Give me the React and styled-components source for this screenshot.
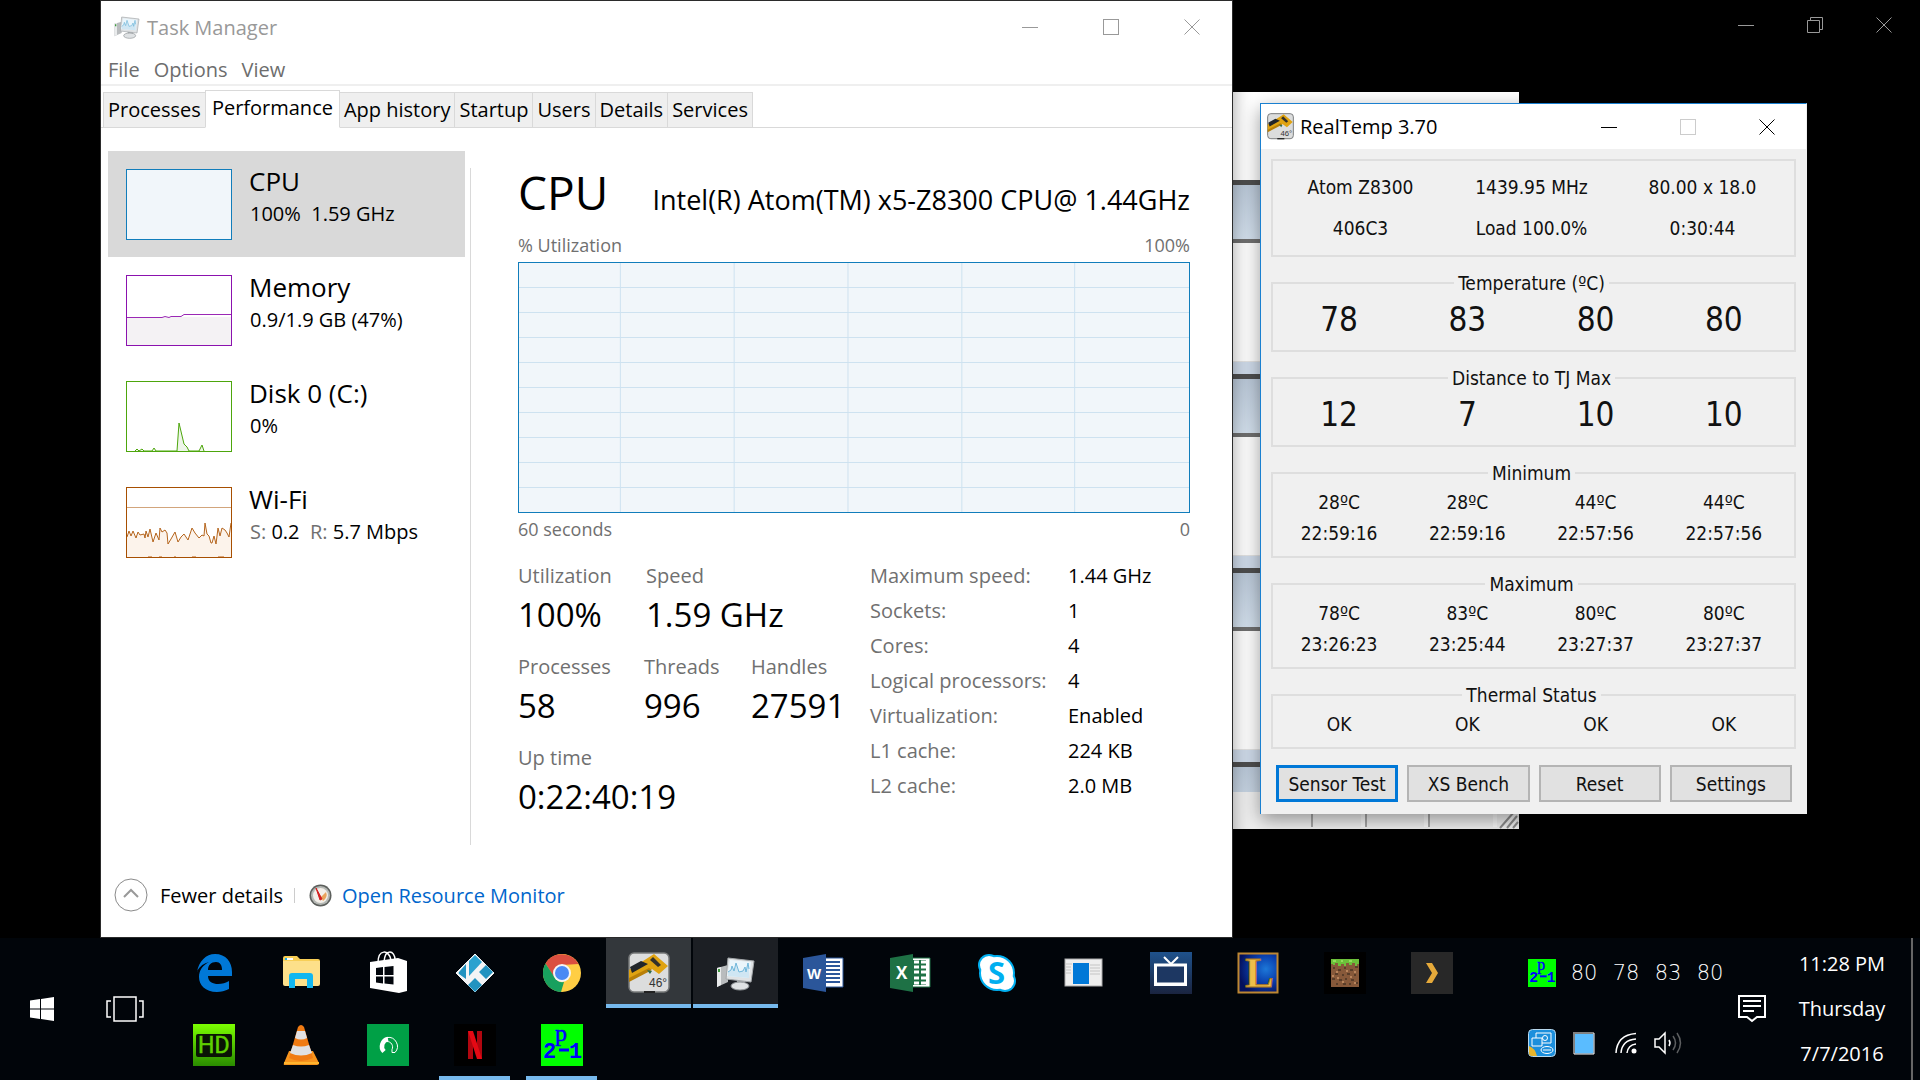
import React, { useState } from "react";
import styled, { createGlobalStyle } from "styled-components";

const GlobalStyle = createGlobalStyle`
  * {
    box-sizing: border-box;
  }

  body {
    margin: 0;
    background: #000;
    font-family: "Open Sans", "Noto Sans", sans-serif;
    font-size: 20px;
    color: #000;
  }

  button {
    font: inherit;
    color: inherit;
    padding: 0;
    border: none;
    background: none;
  }
`;

const Screen = styled.div`
  display: flex;
  flex-direction: column;
  min-height: 100vh;
`;

const Desktop = styled.main`
  position: relative;
  flex: 1;
  overflow: hidden;
`;

/* ---------- window chrome ---------- */

const Controls = styled.div`
  display: flex;
  margin-left: auto;
`;

const ControlButton = styled.button`
  display: flex;
  align-items: center;
  justify-content: center;
  width: ${(props) => props.$width}px;
  color: ${(props) => props.$color};
`;

const TitleBar = styled.header`
  display: flex;
  height: ${(props) => props.$height}px;
  padding-left: ${(props) => props.$inset}px;
  background: #fff;
`;

const TitleText = styled.h1`
  display: flex;
  align-items: center;
  gap: 6px;
  margin: 0;
  font-size: 20px;
  font-weight: 400;
  color: ${(props) => props.$color};
`;

const DesktopControls = styled.div`
  position: absolute;
  top: 0;
  right: 2px;
  display: flex;
  height: 49px;
`;

const controlShapes = {
  Minimize: <path d="M0 8.5h16" />,
  Maximize: <rect x="0.5" y="0.5" width="15" height="15" />,
  Restore: <path d="M0.500 3.500h12v12h-12zM3.500 3.500v-3h12v12h-3" />,
  Close: <path d="M0.500 0.500l15 15M15.500 0.500l-15 15" />,
};

function Control({ kind, width, color }) {
  return (
    <ControlButton type="button" aria-label={kind} $width={width} $color={color}>
      <svg width="16" height="16" viewBox="0 0 16 16" fill="none" stroke="currentColor">
        {controlShapes[kind]}
      </svg>
    </ControlButton>
  );
}

/* ---------- task manager ---------- */

const TaskManagerWindow = styled.section`
  position: absolute;
  top: 1px;
  bottom: 1px;
  left: 101px;
  right: 688px;
  display: flex;
  flex-direction: column;
  background: #fff;
  outline: 1px solid #2b2b2b;
  box-shadow: 2px 0 16px rgba(0, 0, 0, 0.35);
`;

const MenuBar = styled.nav`
  display: flex;
  gap: 14px;
  height: 33px;
  padding: 2px 0 0 7px;
  border-bottom: 2px solid #efefef;
`;

const MenuButton = styled.button`
  color: #6d6d6d;
`;

const TabList = styled.div`
  display: flex;
  align-items: flex-end;
  height: 42px;
  padding-left: 2px;
  box-shadow: inset 0 -1px #d9d9d9;
`;

const Tab = styled.button`
  height: ${(props) => (props.$active ? 38 : 36)}px;
  padding: ${(props) => (props.$active ? "0 6px 2px" : "0 4px")};
  line-height: 34px;
  background: ${(props) => (props.$active ? "#fff" : "#efefef")};
  border: 1px solid #d9d9d9;
  border-left-width: ${(props) => (props.$first || props.$active ? 1 : 0)}px;
  border-right-width: ${(props) => (props.$beforeActive ? 0 : 1)}px;
  border-bottom-color: ${(props) => (props.$active ? "#fff" : "#d9d9d9")};
`;

const Body = styled.div`
  display: flex;
  flex: 1;
`;

const ResourceList = styled.div`
  flex: none;
  width: 364px;
  padding: 23px 0 0 7px;
`;

const ResourceItem = styled.button`
  display: flex;
  gap: 17px;
  width: 100%;
  height: 106px;
  padding-left: 18px;
  text-align: left;
  background: ${(props) => (props.$selected ? "#d9d9d9" : "transparent")};
`;

const Thumb = styled.svg`
  flex: none;
  width: 106px;
  height: 71px;
  margin-top: 18px;
`;

const ResourceText = styled.span`
  display: flex;
  flex-direction: column;
  gap: 2px;
  padding-top: 14px;
`;

const ResourceName = styled.span`
  font-size: 26px;
  line-height: 32px;
`;

const ResourceValue = styled.span`
  font-size: 20px;
  line-height: 30px;
  padding-left: 1px;
  white-space: pre;
`;

const Muted = styled.span`
  color: #707070;
`;

const Details = styled.div`
  flex: 1;
  margin: 40px 0 8px 5px;
  padding: 0 42px 0 47px;
  border-left: 1px solid #d9d9d9;
`;

const DetailsHeader = styled.div`
  display: flex;
  justify-content: space-between;
  align-items: baseline;
  height: 55px;
  margin-bottom: 8px;
`;

const DetailsTitle = styled.h2`
  margin: 0;
  font-size: 46px;
  font-weight: 400;
  line-height: 48px;
`;

const DetailsModel = styled.p`
  margin: 0;
  font-size: 27px;
`;

const ChartCaption = styled.div`
  display: flex;
  justify-content: space-between;
  font-size: 18px;
  line-height: 28px;
  color: #707070;
`;

const Chart = styled.svg`
  display: block;
  width: 100%;
  height: 251px;
  margin: 3px 0 2px;
`;

const Stats = styled.div`
  display: grid;
  grid-template-columns: 352px 1fr;
  margin-top: 15px;
`;

const StatRows = styled.div`
  display: flex;
  flex-direction: column;
  gap: 13px;
  padding-top: 3px;
`;

const StatRow = styled.div`
  display: flex;
`;

const Stat = styled.div`
  min-width: ${(props) => props.$width || 0}px;
  font-size: 33px;
  line-height: 48px;
`;

const StatLabel = styled.div`
  font-size: 20px;
  line-height: 30px;
  color: #707070;
`;

const Facts = styled.dl`
  display: grid;
  grid-template-columns: 198px 1fr;
  align-content: start;
  margin: 0;
  line-height: 35px;

  dt {
    color: #707070;
  }

  dd {
    margin: 0;
  }
`;

const Footer = styled.footer`
  display: flex;
  align-items: center;
  height: 84px;
  padding-left: 13px;
`;

const FewerButton = styled.button`
  display: flex;
  align-items: center;
  gap: 12px;
  padding-right: 11px;
`;

const FooterDivider = styled.span`
  height: 15px;
  border-left: 1px solid #ccc;
`;

const MonitorLink = styled.a`
  display: flex;
  align-items: center;
  gap: 10px;
  padding-left: 14px;
  color: #0066cc;
  text-decoration: none;
`;

function ComputerIcon({ size }) {
  return (
    <svg width={size} height={size} viewBox="0 0 42 42" aria-hidden="true">
      <path d="M2 16l11-3v17l-11 5z" fill="#b9bcbe" />
      <path d="M2 16l4-1v18l-4 2z" fill="#e9ebec" />
      <path d="M3 17h2v3h-2z" fill="#3f9a3f" />
      <path d="M22 26h8v6h-8z" fill="#a9adb0" />
      <ellipse cx="25" cy="34" rx="9" ry="4" fill="#dfe2e4" stroke="#8f9497" />
      <path d="M13 6l26 3-3 21-25-3z" fill="#dfe2e4" stroke="#a3a7aa" />
      <path d="M15 8l21 2-2 16-22-2z" fill="#eaf5fb" />
      <path d="M13 20l3-2 1-4 2 5 2-8 3 9 4-1 2-4 1 5 2-9 1 6v9l-21-2z" fill="#cfe6f3" />
      <path
        d="M13 20l3-2 1-4 2 5 2-8 3 9 4-1 2-4 1 5 2-9 1 6"
        fill="none"
        stroke="#6fb6da"
        strokeWidth="1"
      />
    </svg>
  );
}

function GaugeIcon() {
  return (
    <svg width="23" height="23" viewBox="0 0 23 23" aria-hidden="true">
      <circle cx="11.500" cy="11.500" r="11" fill="#5c5f5c" />
      <circle cx="11.500" cy="11.500" r="9.500" fill="#b5b8b4" />
      <circle cx="11.500" cy="11.500" r="7.500" fill="#f3efe9" />
      <path d="M17 8a7 7 0 0 1-3 9l-2-4z" fill="#e9a35c" />
      <path d="M7 4l6 11-2 1z" fill="#d21f1f" stroke="#d21f1f" />
    </svg>
  );
}

function CpuThumb() {
  return (
    <Thumb viewBox="0 0 106 71">
      <rect x="0.500" y="0.500" width="105" height="70" fill="#f1f6fa" stroke="#117dbb" />
    </Thumb>
  );
}

function MemoryThumb() {
  return (
    <Thumb viewBox="0 0 106 71">
      <rect x="0.500" y="42" width="105" height="29" fill="#f4f2f4" />
      <path
        d="M0 42.500h36l3-1 4 1 2-1h10l3-2h47"
        fill="none"
        stroke="#9b28b5"
      />
      <rect x="0.500" y="0.500" width="105" height="70" fill="none" stroke="#8b12ae" />
    </Thumb>
  );
}

function DiskThumb() {
  return (
    <Thumb viewBox="0 0 106 71">
      <path
        d="M9 70l2-2 2 2 3-2 2 2h8l2-3 2 3h21l2-28 5 21 3 3 2 4h10l3-6 2 6"
        fill="#eef5e9"
        stroke="#4da60c"
      />
      <rect x="0.500" y="0.500" width="105" height="70" fill="none" stroke="#4da60c" />
    </Thumb>
  );
}

const wifiPoints =
  "1,50 3,44 5,49 7,44 10,51 12,45 14,48 18,47 19,51 20,44 22,50 24,42 27,55 30,46 33,53 34,41 36,45 39,43 41,46 42,57 45,52 49,45 52,55 55,50 58,47 62,53 66,41 69,46 73,51 76,48 78,49 79,36 81,47 83,49 85,56 86,56 88,49 90,57 92,41 94,49 96,41 99,43 101,46 103,50 105,36";

function WifiThumb() {
  return (
    <Thumb viewBox="0 0 106 71">
      <polygon points={"1,70 " + wifiPoints + " 105,70"} fill="#fcf3eb" />
      <path d="M0 20.500h106" stroke="#d2a57c" />
      <polyline points={wifiPoints} fill="none" stroke="#b5651d" />
      <path d="M22 69.500h4M33 69.500h3M48 69.500h2M66 69.500h4M92 69.500h6" stroke="#d9a67c" />
      <rect x="0.500" y="0.500" width="105" height="70" fill="none" stroke="#a74f01" />
    </Thumb>
  );
}

function UtilizationChart() {
  const rows = [25, 50, 75, 100, 125, 150, 175, 200, 225];
  const columns = [102, 216, 330, 444, 557];

  return (
    <Chart viewBox="0 0 673 251" preserveAspectRatio="none">
      <rect x="0.500" y="0.500" width="672" height="250" fill="#f1f6fa" stroke="#117dbb" />
      {rows.map((y) => (
        <path key={y} d={`M1 ${y}.500h671`} stroke="#cee2f0" />
      ))}
      {columns.map((x) => (
        <path key={x} d={`M${x}.500 1v249`} stroke="#cee2f0" />
      ))}
    </Chart>
  );
}

const tabs = [
  "Processes",
  "Performance",
  "App history",
  "Startup",
  "Users",
  "Details",
  "Services",
];

const resources = [
  { name: "CPU", value: "100%  1.59 GHz", thumb: <CpuThumb /> },
  { name: "Memory", value: "0.9/1.9 GB (47%)", thumb: <MemoryThumb /> },
  { name: "Disk 0 (C:)", value: "0%", thumb: <DiskThumb /> },
  {
    name: "Wi-Fi",
    value: (
      <>
        <Muted>S:</Muted> 0.2 <Muted> R:</Muted> 5.7 Mbps
      </>
    ),
    thumb: <WifiThumb />,
  },
];

const facts = [
  ["Maximum speed:", "1.44 GHz"],
  ["Sockets:", "1"],
  ["Cores:", "4"],
  ["Logical processors:", "4"],
  ["Virtualization:", "Enabled"],
  ["L1 cache:", "224 KB"],
  ["L2 cache:", "2.0 MB"],
];

function TaskManager() {
  const [activeTab, setActiveTab] = useState(1);
  const [selected, setSelected] = useState(0);

  return (
    <TaskManagerWindow>
      <TitleBar $height={52} $inset={12}>
        <TitleText $color="#999">
          <ComputerIcon size={28} />
          Task Manager
        </TitleText>
        <Controls>
          <Control kind="Minimize" width={81} color="#999" />
          <Control kind="Maximize" width={81} color="#999" />
          <Control kind="Close" width={81} color="#999" />
        </Controls>
      </TitleBar>
      <MenuBar>
        <MenuButton type="button">File</MenuButton>
        <MenuButton type="button">Options</MenuButton>
        <MenuButton type="button">View</MenuButton>
      </MenuBar>
      <TabList role="tablist">
        {tabs.map((tab, i) => (
          <Tab
            key={tab}
            type="button"
            role="tab"
            aria-selected={i === activeTab}
            $active={i === activeTab}
            $first={i === 0}
            $beforeActive={i === activeTab - 1}
            onClick={() => setActiveTab(i)}
          >
            {tab}
          </Tab>
        ))}
      </TabList>
      <Body>
        <ResourceList>
          {resources.map((item, i) => (
            <ResourceItem
              key={item.name}
              type="button"
              $selected={i === selected}
              onClick={() => setSelected(i)}
            >
              {item.thumb}
              <ResourceText>
                <ResourceName>{item.name}</ResourceName>
                <ResourceValue>{item.value}</ResourceValue>
              </ResourceText>
            </ResourceItem>
          ))}
        </ResourceList>
        <Details>
          <DetailsHeader>
            <DetailsTitle>CPU</DetailsTitle>
            <DetailsModel>Intel(R) Atom(TM) x5-Z8300 CPU@ 1.44GHz</DetailsModel>
          </DetailsHeader>
          <ChartCaption>
            <span>% Utilization</span>
            <span>100%</span>
          </ChartCaption>
          <UtilizationChart />
          <ChartCaption>
            <span>60 seconds</span>
            <span>0</span>
          </ChartCaption>
          <Stats>
            <StatRows>
              <StatRow>
                <Stat $width={128}>
                  <StatLabel>Utilization</StatLabel>100%
                </Stat>
                <Stat>
                  <StatLabel>Speed</StatLabel>1.59 GHz
                </Stat>
              </StatRow>
              <StatRow>
                <Stat $width={126}>
                  <StatLabel>Processes</StatLabel>58
                </Stat>
                <Stat $width={107}>
                  <StatLabel>Threads</StatLabel>996
                </Stat>
                <Stat>
                  <StatLabel>Handles</StatLabel>27591
                </Stat>
              </StatRow>
              <StatRow>
                <Stat>
                  <StatLabel>Up time</StatLabel>0:22:40:19
                </Stat>
              </StatRow>
            </StatRows>
            <Facts>
              {facts.map(([label, value]) => (
                <React.Fragment key={label}>
                  <dt>{label}</dt>
                  <dd>{value}</dd>
                </React.Fragment>
              ))}
            </Facts>
          </Stats>
        </Details>
      </Body>
      <Footer>
        <FewerButton type="button">
          <svg width="34" height="34" viewBox="0 0 34 34" fill="none" aria-hidden="true">
            <circle cx="17" cy="17" r="16" stroke="#8a8a8a" />
            <path d="M10 19l7-7 7 7" stroke="#999" strokeWidth="2" />
          </svg>
          Fewer details
        </FewerButton>
        <FooterDivider />
        <MonitorLink href="#resource-monitor">
          <GaugeIcon />
          Open Resource Monitor
        </MonitorLink>
      </Footer>
    </TaskManagerWindow>
  );
}

/* ---------- window behind ---------- */

const BackWindow = styled.section`
  position: absolute;
  top: 92px;
  left: 900px;
  width: 619px;
  display: flex;
  flex-direction: column;
  background: #fff;
`;

const BackTop = styled.div`
  height: 88px;
`;

const ChildTitle = styled.div`
  height: ${(props) => (props.$cropped ? 30 : 63)}px;
  border-top: 5px solid #4f4f4f;
  border-bottom: ${(props) => (props.$cropped ? "none" : "4px solid #707070")};
  background: linear-gradient(#bccada, #d5e2ef) 0 0 / 100% 54px;
`;

const ChildBody = styled.div`
  height: 118px;
  background: #fff;
`;

const ChildFrame = styled.div`
  height: 13px;
  background: #d0dceb;
  border-top: 1px solid #e4e4e4;
`;

const BackStatus = styled.div`
  display: flex;
  justify-content: flex-end;
  height: 37px;
  background: #f0f0f0;
`;

const StatusCell = styled.span`
  width: ${(props) => props.$width}px;
  margin-bottom: 2px;
  border-left: 2px solid #a8a8a8;
  border-right: 4px solid #fafafa;
`;

const Grip = styled.svg`
  align-self: flex-end;
  width: 22px;
  height: 18px;
`;

function BackgroundWindow() {
  return (
    <BackWindow>
      <BackTop />
      <ChildTitle />
      <ChildBody />
      <ChildFrame />
      <ChildTitle />
      <ChildBody />
      <ChildFrame />
      <ChildTitle />
      <ChildBody />
      <ChildFrame />
      <ChildTitle $cropped />
      <BackStatus>
        <StatusCell $width={54} />
        <StatusCell $width={63} />
        <StatusCell $width={69} />
        <Grip viewBox="0 0 22 18" stroke="#8c8c8c" strokeWidth="2">
          <path d="M3 17L17 1M10 17L20 5M16 17l5-6" />
        </Grip>
      </BackStatus>
    </BackWindow>
  );
}

/* ---------- RealTemp ---------- */

const RealTempWindow = styled.section`
  position: absolute;
  top: 103px;
  left: 1260px;
  width: 547px;
  background: #f0f0f0;
  border: 1px solid #1a80d0;
  border-right-color: #f0f0f0;
  border-bottom: none;
  box-shadow: 0 6px 18px rgba(0, 0, 0, 0.4);
`;

const Panel = styled.div`
  display: flex;
  flex-direction: column;
  gap: 15px;
  padding: 10px 10px 12px;
  font-family: "DejaVu Sans Condensed", "DejaVu Sans", sans-serif;
  font-stretch: condensed;
  font-size: 19px;
  color: #111;
`;

const Group = styled.fieldset`
  margin: 0;
  padding: ${(props) => (props.$plain ? "6px 6px 6px 2px" : "3px 6px 7px 2px")};
  border: 2px solid #dedede;
`;

const GroupTitle = styled.legend`
  margin: 0 auto;
  padding: 0 4px;
  line-height: 22px;
`;

const Cells = styled.div`
  display: grid;
  grid-template-columns: repeat(${(props) => props.$columns}, 1fr);
  text-align: center;
  font-size: ${(props) => (props.$large ? 33 : 19)}px;
  line-height: ${(props) => props.$line}px;
`;

const PanelButtons = styled.div`
  display: grid;
  grid-template-columns: repeat(4, 1fr);
  gap: 9px;
  padding: 1px 4px 0 5px;
`;

const PanelButton = styled.button`
  height: 37px;
  background: #e1e1e1;
  white-space: nowrap;
  border: ${(props) => (props.$focused ? "3px solid #0078d7" : "2px solid #b4b4b4")};
`;

const groups = [
  { title: "Temperature (ºC)", large: true, cells: ["78", "83", "80", "80"] },
  { title: "Distance to TJ Max", large: true, cells: ["12", "7", "10", "10"] },
  {
    title: "Minimum",
    cells: ["28ºC", "28ºC", "44ºC", "44ºC", "22:59:16", "22:59:16", "22:57:56", "22:57:56"],
  },
  {
    title: "Maximum",
    cells: ["78ºC", "83ºC", "80ºC", "80ºC", "23:26:23", "23:25:44", "23:27:37", "23:27:37"],
  },
  { title: "Thermal Status", cells: ["OK", "OK", "OK", "OK"] },
];

const summary = ["Atom Z8300", "1439.95 MHz", "80.00 x 18.0", "406C3", "Load 100.0%", "0:30:44"];

function CaliperIcon({ size }) {
  return (
    <svg width={size} height={size} viewBox="0 0 42 42" aria-hidden="true">
      <rect x="1" y="1" width="40" height="39" rx="5" fill="#dcdddd" stroke="#77797a" strokeWidth="1.500" />
      <path d="M1 18L26 2l14 12-9 8-7-5-23 10z" fill="#e0a311" />
      <path d="M2 15l11-6 7 3-16 9z" fill="#22262a" />
      <path d="M25 5l8 8-3 2-8-7z" fill="#33312b" />
      <path d="M1 26l20-10 3 2-23 12z" fill="#b87f07" />
      <path d="M19 18l5 1-2 3z" fill="#2c6b4d" />
      <text x="21" y="35" fontFamily="Liberation Sans" fontSize="12" fill="#333">
        46°
      </text>
      <path d="M16 40h11" stroke="#222" strokeWidth="2" />
    </svg>
  );
}

function RealTemp() {
  return (
    <RealTempWindow>
      <TitleBar $height={45} $inset={6}>
        <TitleText $color="#000">
          <CaliperIcon size={27} />
          RealTemp 3.70
        </TitleText>
        <Controls>
          <Control kind="Minimize" width={79} color="#000" />
          <Control kind="Maximize" width={79} color="#ccc" />
          <Control kind="Close" width={79} color="#000" />
        </Controls>
      </TitleBar>
      <Panel>
        <Group $plain>
          <Cells $columns={3} $line={41}>
            {summary.map((text) => (
              <span key={text}>{text}</span>
            ))}
          </Cells>
        </Group>
        {groups.map((group) => (
          <Group key={group.title}>
            <GroupTitle>{group.title}</GroupTitle>
            <Cells $columns={4} $large={group.large} $line={group.large ? 46 : 31}>
              {group.cells.map((text, i) => (
                <span key={i}>{text}</span>
              ))}
            </Cells>
          </Group>
        ))}
        <PanelButtons>
          <PanelButton type="button" $focused>
            Sensor Test
          </PanelButton>
          <PanelButton type="button">XS Bench</PanelButton>
          <PanelButton type="button">Reset</PanelButton>
          <PanelButton type="button">Settings</PanelButton>
        </PanelButtons>
      </Panel>
    </RealTempWindow>
  );
}

/* ---------- taskbar ---------- */

const Bar = styled.footer`
  display: flex;
  height: 142px;
  background: #01050a;
  color: #fff;
`;

const BarButton = styled.button`
  display: flex;
  align-items: center;
  justify-content: center;
  width: ${(props) => props.$width}px;
`;

const Apps = styled.div`
  flex: 1;
  display: grid;
  grid-template-columns: repeat(auto-fill, 85px);
  grid-template-rows: repeat(2, 70px);
  gap: 2px;
  padding-left: 5px;
`;

const tileColors = { focused: "#33373b", open: "#1c1f24" };

const AppTile = styled.button`
  position: relative;
  display: flex;
  align-items: center;
  justify-content: center;
  background: ${(props) => tileColors[props.$state] || "transparent"};

  &::after {
    content: "";
    position: absolute;
    bottom: 0;
    left: ${(props) => (props.$state === "running" ? 7 : 0)}px;
    right: ${(props) => (props.$state === "running" ? 7 : 0)}px;
    height: 4px;
    background: ${(props) => (props.$state ? "#76b9ed" : "transparent")};
  }
`;

const Tray = styled.div`
  display: grid;
  grid-template-columns: repeat(5, 42px);
  grid-template-rows: repeat(2, 70px);
`;

const TrayCell = styled.span`
  display: flex;
  align-items: center;
  justify-content: center;
  font-family: "DejaVu Sans Light", "DejaVu Sans", sans-serif;
  font-weight: 200;
  font-size: 21px;
`;

const Clock = styled.time`
  display: flex;
  flex-direction: column;
  width: 138px;
  padding-top: 3px;
  text-align: center;
  line-height: 45px;
`;

const ShowDesktop = styled.button`
  width: 9px;
  border-left: 2px solid #666;
`;

const IconSvg = styled.svg`
  overflow: visible;
`;

function Icon({ size = 42, children }) {
  return (
    <IconSvg width={size} height={size} viewBox="0 0 42 42" aria-hidden="true">
      {children}
    </IconSvg>
  );
}

function PrimeIcon({ size }) {
  return (
    <Icon size={size}>
      <rect width="42" height="42" fill="#0f0" />
      <g fill="#00f">
        <text x="14" y="17" fontFamily="Liberation Serif" fontSize="24" stroke="#00f" strokeWidth="0.500">
          p
        </text>
        <text x="2" y="34" fontFamily="Liberation Mono" fontSize="22" fontWeight="700">
          2
        </text>
        <text x="28" y="34" fontFamily="Liberation Mono" fontSize="22" fontWeight="700">
          1
        </text>
      </g>
      <path d="M18 26h10" stroke="#00f" strokeWidth="3" />
    </Icon>
  );
}

const apps = [
  {
    name: "Edge",
    icon: (
      <Icon>
        <path
          d="M4 20C6 9 13 2 22 2c11 0 17 8 17 18v4H15c0 6 5 8 10 8 4 0 8-1 11-3v8c-4 2-8 3-12 3-12 0-18-7-18-15 0-7 4-12 10-15-5 1-9 4-12 9zM15 18h14c0-5-2-8-6-8-5 0-8 3-8 8z"
          fill="#0078d7"
        />
      </Icon>
    ),
  },
  {
    name: "File Explorer",
    icon: (
      <Icon>
        <path d="M3 6q0-2 2-2h12l3 3h18q2 0 2 2v23H3z" fill="#f8cf57" />
        <path d="M3 9h37v23q0 2-2 2H5q-2 0-2-2z" fill="#fde08a" />
        <path d="M5 7h8" stroke="#fff" strokeWidth="2" />
        <path d="M5 7h2" stroke="#1fb0e8" strokeWidth="2" />
        <path d="M9 36V24q0-3 3-3h18q3 0 3 3v12h-6v-9H15v9z" fill="#12b7f0" />
      </Icon>
    ),
  },
  {
    name: "Store",
    icon: (
      <Icon>
        <path d="M11 11C11-3 22-3 24 8M17 10C18-4 28-2 28 8" fill="none" stroke="#fff" strokeWidth="1.500" />
        <path d="M3 10l28-4 9 3v30l-8 2-29-5z" fill="#fff" />
        <path d="M9 16l7-1v8H9zM17.500 15l9-1v9h-9zM9 24.500h7v7l-7-1zM17.500 24.500h9v8l-9-1z" fill="#02060c" />
      </Icon>
    ),
  },
  {
    name: "Kodi",
    icon: (
      <Icon>
        <path d="M21 2l19 19-19 19L2 21z" fill="#f2f4f5" stroke="#f2f4f5" strokeLinejoin="round" />
        <path d="M21 3l7 7-13 14V9z" fill="#2aa2cf" />
        <path d="M12 12v15l-7-5q-1-1 0-2zM32 13l7 7-7 7-7-7zM21 26l7 7-7 7-7-7z" fill="#2293c0" />
      </Icon>
    ),
  },
  {
    name: "Chrome",
    icon: (
      <Icon>
        <circle cx="21" cy="21" r="19" fill="#ffce44" />
        <path d="M4.500 11.500A19 19 0 0 1 37.500 12L21 13l-8 12z" fill="#db4f40" />
        <path d="M4.500 11.500L14 26q3 5 9 4l-3 10A19 19 0 0 1 4.500 11.500z" fill="#18a05e" />
        <circle cx="21" cy="21" r="9" fill="#f5f5f5" />
        <circle cx="21" cy="21" r="7" fill="#4a8af4" />
      </Icon>
    ),
  },
  { name: "RealTemp", state: "focused", icon: <CaliperIcon size={42} /> },
  { name: "Task Manager", state: "open", icon: <ComputerIcon size={42} /> },
  {
    name: "Word",
    icon: (
      <Icon>
        <path d="M22 6h19v29H22z" fill="#fff" stroke="#2b569a" />
        <path d="M24 10h14M24 14h14M24 18h14M24 22h14M24 26h14M24 30h14" stroke="#2b569a" strokeWidth="2" />
        <path d="M1 6l23-4v38L1 36z" fill="#2b569a" />
        <text x="5" y="27" fontFamily="Liberation Sans" fontSize="15" fontWeight="700" fill="#fff">
          W
        </text>
      </Icon>
    ),
  },
  {
    name: "Excel",
    icon: (
      <Icon>
        <path d="M22 6h19v29H22z" fill="#fff" stroke="#1e7145" />
        <path d="M23 8h14v25H23z" fill="#1e7145" />
        <path d="M25 10h5M25 15h5M25 20h5M25 26h5M25 31h5M32 10h5M32 15h5M32 20h5M32 26h5M32 31h5" stroke="#fff" strokeWidth="3" />
        <path d="M1 6l23-4v38L1 36z" fill="#1e7145" />
        <text x="7" y="27" fontFamily="Open Sans" fontSize="17" fontWeight="700" fill="#fff">
          X
        </text>
      </Icon>
    ),
  },
  {
    name: "Skype",
    icon: (
      <Icon>
        <g fill="#00aff0">
          <circle cx="13" cy="13" r="11" />
          <circle cx="21" cy="21" r="18" />
          <circle cx="29" cy="29" r="11" />
        </g>
        <g fill="#fff">
          <circle cx="13" cy="13" r="9" />
          <circle cx="21" cy="21" r="16" />
          <circle cx="29" cy="29" r="9" />
        </g>
        <text x="12" y="32" fontFamily="Open Sans" fontSize="31" fontWeight="700" fill="#00aff0">
          S
        </text>
      </Icon>
    ),
  },
  {
    name: "Calibration",
    icon: (
      <Icon>
        <rect x="2" y="7" width="37" height="27" fill="#eee" stroke="#aaa" />
        <path d="M3 12h6M3 15h5M3 18h5M3 21h5M27 13h10M27 16h10M27 19h10M27 22h10" stroke="#c4c4c4" />
        <rect x="10" y="11" width="16" height="21" fill="#0078d7" />
      </Icon>
    ),
  },
  {
    name: "TV",
    icon: (
      <Icon>
        <defs>
          <linearGradient id="tvBack" x1="0" y1="0" x2="0" y2="1">
            <stop offset="0" stopColor="#1f528c" />
            <stop offset="1" stopColor="#1a2440" />
          </linearGradient>
        </defs>
        <rect width="42" height="42" fill="url(#tvBack)" />
        <path d="M14 5l7 7 7-7" fill="none" stroke="#fff" strokeWidth="2" />
        <rect x="5.500" y="13" width="30" height="19" fill="#1d3762" stroke="#fff" strokeWidth="3" />
        <path d="M4 32.500h33" stroke="#fff" strokeWidth="3" />
      </Icon>
    ),
  },
  {
    name: "League of Legends",
    icon: (
      <Icon>
        <defs>
          <radialGradient id="lolBack" cx="0.700" cy="0.400" r="0.700">
            <stop offset="0" stopColor="#1d78d8" />
            <stop offset="0.500" stopColor="#0a3fae" />
            <stop offset="1" stopColor="#04105c" />
          </radialGradient>
        </defs>
        <rect x="1.500" y="1.500" width="39" height="39" fill="url(#lolBack)" stroke="#bd8733" strokeWidth="2" />
        <text x="8" y="35" fontFamily="Liberation Serif" fontSize="43" fontWeight="700" fill="#eebf4a" stroke="#a8741c">
          L
        </text>
      </Icon>
    ),
  },
  {
    name: "Minecraft",
    icon: (
      <Icon>
        <rect width="42" height="42" fill="#000" />
        <rect x="7" y="7" width="28" height="28" fill="#87593a" />
        <path
          d="M9 15h2v2H9zM14 17h3v2h-3zM20 15h2v2h-2zM26 17h3v2h-3zM31 14h3v2h-3zM11 21h3v2h-3zM18 22h2v2h-2zM23 21h3v2h-3zM30 22h2v2h-2zM8 26h3v2H8zM15 27h3v2h-3zM21 26h2v2h-2zM27 27h3v2h-3zM12 31h2v2h-2zM19 31h3v2h-3zM25 31h2v2h-2zM32 30h2v2h-2z"
          fill="#593d29"
        />
        <path
          d="M12 19h2v2h-2zM22 18h2v2h-2zM30 19h2v2h-2zM8 23h2v2H8zM26 24h2v2h-2zM13 25h2v2h-2zM18 29h2v2h-2zM30 30h2v2h-2z"
          fill="#b9855c"
        />
        <path d="M7 7h28v5h-2v2h-2v-3h-3v2h-3v-2h-3v3h-2v-2h-3v2h-3v-3h-3v2h-2v-1H7z" fill="#6cc03a" />
        <path d="M9 8h3v2H9zM17 8h2v2h-2zM25 8h3v2h-3z" fill="#8fe05a" />
      </Icon>
    ),
  },
  {
    name: "Plex",
    icon: (
      <Icon>
        <rect width="42" height="42" fill="#282828" />
        <path d="M15 11h6l6 10-6 10h-6l6-10z" fill="#e5a93a" />
      </Icon>
    ),
  },
  {
    name: "HD Player",
    icon: (
      <Icon>
        <defs>
          <linearGradient id="hdBack" x1="0" y1="0" x2="0" y2="1">
            <stop offset="0" stopColor="#7bff00" />
            <stop offset="1" stopColor="#2a8c00" />
          </linearGradient>
        </defs>
        <rect width="42" height="42" fill="url(#hdBack)" />
        <rect x="3" y="10" width="36" height="23" rx="2" fill="#0a1405" />
        <text x="5" y="29" fontFamily="Roboto" fontSize="23" fill="#5fd000" stroke="#5fd000" strokeWidth="0.500">
          HD
        </text>
      </Icon>
    ),
  },
  {
    name: "VLC",
    icon: (
      <Icon>
        <path d="M9 27h24l6 12q0 2-2 2H5q-2 0-1-2z" fill="#f7941d" />
        <path d="M4 39h35" stroke="#ffb52e" strokeWidth="2" />
        <path d="M18 3q3-4 6 0l9 31q-12 6-24 0z" fill="#f07b13" />
        <path d="M17 7h8l2 7q-6 3-12 0zM13 21q8 3 16 0l3 8q-11 5-22 0z" fill="#e0e0e2" />
      </Icon>
    ),
  },
  {
    name: "Phone Dashboard",
    icon: (
      <Icon>
        <rect width="42" height="42" fill="#00a046" />
        <path d="M17 27.500A7.500 7.500 0 0 1 21 15" fill="none" stroke="#fff" strokeWidth="4.500" />
        <path d="M20 13.500a9 9 0 0 1 8 15h-3v-3a5.500 5.500 0 0 0-5-8" fill="none" stroke="#fff" />
      </Icon>
    ),
  },
  {
    name: "Netflix",
    state: "running",
    icon: (
      <Icon>
        <rect width="42" height="42" fill="#000" />
        <rect x="14" y="7" width="5" height="28" fill="#b1060f" />
        <rect x="23" y="7" width="5" height="28" fill="#b1060f" />
        <path d="M14 7h5l9 28h-5z" fill="#e50914" />
      </Icon>
    ),
  },
  { name: "Prime95", state: "running", icon: <PrimeIcon size={42} /> },
];

function Taskbar() {
  return (
    <Bar>
      <BarButton type="button" aria-label="Start" $width={84}>
        <svg width="24" height="24" viewBox="0 0 24 24" fill="#fff">
          <path d="M0 3.500l10-1.500v9.500H0zM11 2l13-2v11.500H11zM0 12.500h10V22L0 20.500zM11 12.500h13V24l-13-2z" />
        </svg>
      </BarButton>
      <BarButton type="button" aria-label="Task View" $width={82}>
        <svg width="38" height="26" viewBox="0 0 38 26" fill="none" stroke="#fff">
          <rect x="8" y="1" width="22" height="24" strokeWidth="1.500" />
          <path d="M5 5H1v16h4M33 5h4v16h-4" strokeWidth="1.500" />
        </svg>
      </BarButton>
      <Apps>
        {apps.map((app) => (
          <AppTile key={app.name} type="button" aria-label={app.name} $state={app.state}>
            {app.icon}
          </AppTile>
        ))}
      </Apps>
      <Tray>
        <TrayCell>
          <PrimeIcon size={28} />
        </TrayCell>
        <TrayCell>80</TrayCell>
        <TrayCell>78</TrayCell>
        <TrayCell>83</TrayCell>
        <TrayCell>80</TrayCell>
        <TrayCell>
          <svg width="28" height="28" viewBox="0 0 28 28" fill="none" stroke="#fff">
            <rect x="0.500" y="0.500" width="27" height="27" rx="4" fill="#1c8fdc" stroke="#b9d9ee" />
            <path d="M1 17q6 2 8 10H4q-3 0-3-3z" fill="#e8b52c" stroke="none" />
            <path d="M8 9V4h15v10h-9M4 9h10v8H4z" />
            <circle cx="17" cy="9" r="2.500" />
            <ellipse cx="19" cy="21" rx="6" ry="3.500" />
            <path d="M15 21h8" />
          </svg>
        </TrayCell>
        <TrayCell>
          <svg width="22" height="23" viewBox="0 0 22 23">
            <rect x="0.500" y="0.500" width="20" height="21" fill="#5abcff" />
            <path d="M1 22V1h20" fill="none" stroke="#808080" strokeWidth="2" />
            <path d="M1 22h20V1" fill="none" stroke="#fff" />
          </svg>
        </TrayCell>
        <TrayCell>
          <svg width="22" height="22" viewBox="0 0 22 22" fill="none" stroke="#fff" strokeWidth="1.500">
            <circle cx="19" cy="19" r="2.500" fill="#fff" stroke="none" />
            <path d="M12 21q1-8 9-9M6 21Q7 8 21 7M1 21Q2 3 21 1.500" />
          </svg>
        </TrayCell>
        <TrayCell>
          <svg width="29" height="24" viewBox="0 0 29 24" fill="none" stroke="#fff" strokeWidth="1.500">
            <path d="M1 8h4l6-6v20l-6-6H1z" />
            <path d="M15 9q2 3 0 6" />
            <path d="M19 5q5 7 0 14M23 2q7 10 0 20" stroke="#5c5e60" />
          </svg>
        </TrayCell>
      </Tray>
      <BarButton type="button" aria-label="Notifications" $width={42}>
        <svg width="28" height="28" viewBox="0 0 28 28" fill="none" stroke="#fff" strokeWidth="2">
          <path d="M1 1h26v21h-8l-5 4-5-4H1z" />
          <path d="M5 6h18M5 11h18M5 16h11" />
        </svg>
      </BarButton>
      <Clock>
        <span>11:28 PM</span>
        <span>Thursday</span>
        <span>7/7/2016</span>
      </Clock>
      <ShowDesktop type="button" aria-label="Show desktop" />
    </Bar>
  );
}

export default function App() {
  return (
    <>
      <GlobalStyle />
      <Screen>
        <Desktop>
          <DesktopControls>
            <Control kind="Minimize" width={69} color="#999" />
            <Control kind="Restore" width={69} color="#999" />
            <Control kind="Close" width={69} color="#999" />
          </DesktopControls>
          <BackgroundWindow />
          <TaskManager />
          <RealTemp />
        </Desktop>
        <Taskbar />
      </Screen>
    </>
  );
}
